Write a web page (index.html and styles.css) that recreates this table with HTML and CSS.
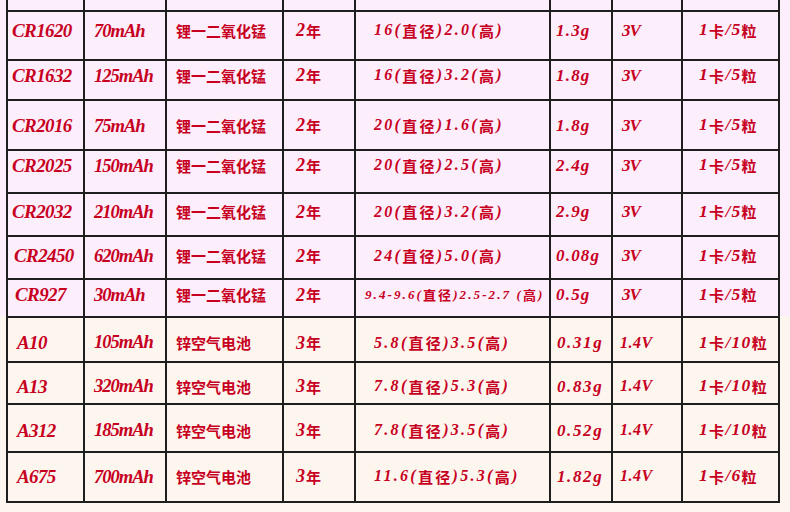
FILE: index.html
```html
<!DOCTYPE html>
<html lang="zh-CN">
<head>
<meta charset="utf-8">
<title>纽扣电池规格</title>
<link rel="stylesheet" href="styles.css">
</head>
<body>
<div class="sheet">
  <div class="band band-li">
    <div class="row stub">
      <div class="c"></div><div class="c"></div><div class="c"></div><div class="c"></div>
      <div class="c"></div><div class="c"></div><div class="c"></div><div class="c"></div>
    </div>
    <div class="row r1">
      <div class="c c1">CR1620</div>
      <div class="c c2">70mAh</div>
      <div class="c c3"><span class="zh">锂一二氧化锰</span></div>
      <div class="c c4">2<span class="zh">年</span></div>
      <div class="c c5">16(<span class="zh">直径</span>)2.0(<span class="zh">高</span>)</div>
      <div class="c c6">1.3g</div>
      <div class="c c7">3V</div>
      <div class="c c8">1<span class="zh">卡</span>/5<span class="zh">粒</span></div>
    </div>
    <div class="row r2">
      <div class="c c1">CR1632</div>
      <div class="c c2">125mAh</div>
      <div class="c c3"><span class="zh">锂一二氧化锰</span></div>
      <div class="c c4">2<span class="zh">年</span></div>
      <div class="c c5">16(<span class="zh">直径</span>)3.2(<span class="zh">高</span>)</div>
      <div class="c c6">1.8g</div>
      <div class="c c7">3V</div>
      <div class="c c8">1<span class="zh">卡</span>/5<span class="zh">粒</span></div>
    </div>
    <div class="row r3">
      <div class="c c1">CR2016</div>
      <div class="c c2">75mAh</div>
      <div class="c c3"><span class="zh">锂一二氧化锰</span></div>
      <div class="c c4">2<span class="zh">年</span></div>
      <div class="c c5">20(<span class="zh">直径</span>)1.6(<span class="zh">高</span>)</div>
      <div class="c c6">1.8g</div>
      <div class="c c7">3V</div>
      <div class="c c8">1<span class="zh">卡</span>/5<span class="zh">粒</span></div>
    </div>
    <div class="row r4">
      <div class="c c1">CR2025</div>
      <div class="c c2">150mAh</div>
      <div class="c c3"><span class="zh">锂一二氧化锰</span></div>
      <div class="c c4">2<span class="zh">年</span></div>
      <div class="c c5">20(<span class="zh">直径</span>)2.5(<span class="zh">高</span>)</div>
      <div class="c c6">2.4g</div>
      <div class="c c7">3V</div>
      <div class="c c8">1<span class="zh">卡</span>/5<span class="zh">粒</span></div>
    </div>
    <div class="row r5">
      <div class="c c1">CR2032</div>
      <div class="c c2">210mAh</div>
      <div class="c c3"><span class="zh">锂一二氧化锰</span></div>
      <div class="c c4">2<span class="zh">年</span></div>
      <div class="c c5">20(<span class="zh">直径</span>)3.2(<span class="zh">高</span>)</div>
      <div class="c c6">2.9g</div>
      <div class="c c7">3V</div>
      <div class="c c8">1<span class="zh">卡</span>/5<span class="zh">粒</span></div>
    </div>
    <div class="row r6">
      <div class="c c1">CR2450</div>
      <div class="c c2">620mAh</div>
      <div class="c c3"><span class="zh">锂一二氧化锰</span></div>
      <div class="c c4">2<span class="zh">年</span></div>
      <div class="c c5">24(<span class="zh">直径</span>)5.0(<span class="zh">高</span>)</div>
      <div class="c c6">0.08g</div>
      <div class="c c7">3V</div>
      <div class="c c8">1<span class="zh">卡</span>/5<span class="zh">粒</span></div>
    </div>
    <div class="row r7">
      <div class="c c1">CR927</div>
      <div class="c c2">30mAh</div>
      <div class="c c3"><span class="zh">锂一二氧化锰</span></div>
      <div class="c c4">2<span class="zh">年</span></div>
      <div class="c c5 small">9.4-9.6(<span class="zh">直径</span>)2.5-2.7 (<span class="zh">高</span>)</div>
      <div class="c c6">0.5g</div>
      <div class="c c7">3V</div>
      <div class="c c8">1<span class="zh">卡</span>/5<span class="zh">粒</span></div>
    </div>
  </div>
  <div class="band band-zn">
    <div class="row r8">
      <div class="c c1">A10</div>
      <div class="c c2">105mAh</div>
      <div class="c c3"><span class="zh">锌空气电池</span></div>
      <div class="c c4">3<span class="zh">年</span></div>
      <div class="c c5">5.8(<span class="zh">直径</span>)3.5(<span class="zh">高</span>)</div>
      <div class="c c6">0.31g</div>
      <div class="c c7">1.4V</div>
      <div class="c c8">1<span class="zh">卡</span>/10<span class="zh">粒</span></div>
    </div>
    <div class="row r9">
      <div class="c c1">A13</div>
      <div class="c c2">320mAh</div>
      <div class="c c3"><span class="zh">锌空气电池</span></div>
      <div class="c c4">3<span class="zh">年</span></div>
      <div class="c c5">7.8(<span class="zh">直径</span>)5.3(<span class="zh">高</span>)</div>
      <div class="c c6">0.83g</div>
      <div class="c c7">1.4V</div>
      <div class="c c8">1<span class="zh">卡</span>/10<span class="zh">粒</span></div>
    </div>
    <div class="row r10">
      <div class="c c1">A312</div>
      <div class="c c2">185mAh</div>
      <div class="c c3"><span class="zh">锌空气电池</span></div>
      <div class="c c4">3<span class="zh">年</span></div>
      <div class="c c5">7.8(<span class="zh">直径</span>)3.5(<span class="zh">高</span>)</div>
      <div class="c c6">0.52g</div>
      <div class="c c7">1.4V</div>
      <div class="c c8">1<span class="zh">卡</span>/10<span class="zh">粒</span></div>
    </div>
    <div class="row r11">
      <div class="c c1">A675</div>
      <div class="c c2">700mAh</div>
      <div class="c c3"><span class="zh">锌空气电池</span></div>
      <div class="c c4">3<span class="zh">年</span></div>
      <div class="c c5">11.6(<span class="zh">直径</span>)5.3(<span class="zh">高</span>)</div>
      <div class="c c6">1.82g</div>
      <div class="c c7">1.4V</div>
      <div class="c c8">1<span class="zh">卡</span>/6<span class="zh">粒</span></div>
    </div>
  </div>
</div>
</body>
</html>
```

FILE: styles.css
```css
html, body {
  margin: 0;
  padding: 0;
  background: #fdf6ee;
}

.sheet {
  width: 790px;
}

.band-li {
  background: #fdeefc;
}

.band-zn {
  background: #fdf6ee;
  padding-bottom: 12px;
}

.row {
  display: grid;
  grid-template-columns: 77px 82px 117px 72px 195px 62px 70px 99px;
  width: 774px;
  margin-left: 6px;
}

.c {
  box-sizing: border-box;
  border-left: 2px solid #1e1e1e;
  border-top: 2px solid #1e1e1e;
  display: flex;
  align-items: center;
  white-space: nowrap;
  line-height: 1;
  color: #c7001f;
  font-family: "Liberation Serif", "Noto Sans CJK SC", serif;
  font-weight: 700;
  font-style: italic;
  font-size: 18px;
}

.c:last-child {
  border-right: 2px solid #1e1e1e;
}

.zh {
  font-family: "Noto Sans CJK SC", sans-serif;
  font-style: normal;
  font-weight: 700;
  font-size: 15px;
}

/* columns */
.c1 { padding-left: 4px; font-size: 19px; letter-spacing: -0.6px; }
.c2 { padding-left: 9px; padding-top: 2px; font-size: 18.5px; letter-spacing: -1px; }
.c3 { padding-left: 9px; }
.c3 .zh { letter-spacing: 0; }
.c4 { padding-left: 12px; font-size: 18px; letter-spacing: 1px; }
.c5 { padding-left: 18px; font-size: 16px; letter-spacing: 2.3px; }
.c5.small { padding-left: 9px; font-size: 13px; letter-spacing: 2.1px; }
.c5.small .zh { font-size: 13px; }
.c6 { padding-left: 5px; font-size: 17px; letter-spacing: 1.2px; }
.c7 { padding-left: 9px; font-size: 17px; letter-spacing: -1px; }
.c8 { padding-left: 16px; font-size: 17.5px; letter-spacing: 1.3px; }

.band-zn .c1 { padding-left: 9px; }
.band-zn .c5 { letter-spacing: 2.3px; }
.band-zn .c6 { letter-spacing: 1.6px; padding-left: 6px; }
.band-zn .c7 { padding-left: 7px; font-size: 16px; letter-spacing: 0.5px; }

/* rows */
.stub { height: 10px; }
.stub .c { border-top: 0; }

.r1 { height: 49px; }
.r1 .c { padding-bottom: 11px; }
.r2 { height: 40px; }
.r2 .c { padding-bottom: 10px; }
.r3 { height: 50px; }
.r4 { height: 43px; }
.r4 .c { padding-bottom: 13px; }
.r5 { height: 43px; }
.r5 .c { padding-bottom: 6px; }
.r6 { height: 43px; }
.r6 .c { padding-bottom: 4px; }
.r6 .c1 { padding-left: 6px; }
.r7 { height: 38px; }
.r7 .c { padding-bottom: 7px; }
.r7 .c1 { padding-left: 7px; }
.r8 { height: 45px; }
.r8 .c { padding-top: 6px; }
.r9 { height: 42px; }
.r9 .c { padding-top: 6px; }
.r10 { height: 48px; }
.r10 .c { padding-top: 4px; }
.r11 { height: 52px; }
.r11 .c { border-bottom: 2px solid #1e1e1e; padding-bottom: 2px; }
```
